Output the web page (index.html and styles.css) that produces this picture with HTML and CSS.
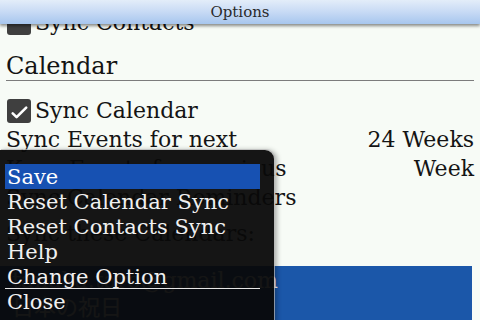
FILE: index.html
```html
<!DOCTYPE html>
<html lang="en">
<head>
<meta charset="utf-8">
<title>Options</title>
<link rel="stylesheet" href="styles.css">
</head>
<body>
<div class="screen">
  <header class="titlebar">Options</header>
  <main class="viewport">
    <div class="scroll">
      <div class="row check-row"><span class="cb"></span><span>Sync Contacts</span></div>
      <h2 class="section">Calendar</h2>
      <div class="row check-row">
        <span class="cb"><svg viewBox="0 0 24 24"><path d="M5.7 14.3 L9.6 18.2 L19.2 8.6"/></svg></span>
        <span>Sync Calendar</span>
      </div>
      <div class="row"><span>Sync Events for next</span><span>24 Weeks</span></div>
      <div class="row"><span>Keep Events for previous</span><span>Week</span></div>
      <div class="row"><span>Sync Calendar Reminders</span></div>
      <div class="row label">Sync these Calendars:</div>
      <div class="cal-list">
        <div class="row cal-row">tanaka.taro@gmail.com</div>
        <div class="row cal-row jp">日本の祝日</div>
      </div>
    </div>
  </main>
  <nav class="menu">
    <div class="menu-item selected">Save</div>
    <div class="menu-item">Reset Calendar Sync</div>
    <div class="menu-item">Reset Contacts Sync</div>
    <div class="menu-item">Help</div>
    <div class="menu-item">Change Option</div>
    <div class="menu-sep"></div>
    <div class="menu-item">Close</div>
  </nav>
</div>
</body>
</html>
```
FILE: styles.css
```css
html, body {
  margin: 0;
  padding: 0;
}
body {
  background: #f7fbf6;
  font-family: "DejaVu Serif", "Liberation Serif", serif;
  color: #141414;
}
.screen {
  position: relative;
  width: 480px;
  height: 320px;
  overflow: hidden;
  display: flex;
  flex-direction: column;
  background: #f7fbf6;
}
.titlebar {
  position: relative;
  z-index: 2;
  flex: none;
  height: 24px;
  line-height: 25px;
  text-align: center;
  font-size: 15px;
  color: #2a2a2a;
  background: linear-gradient(#e3edf9, #cadcf5 45%, #a7c6ee);
  box-shadow: 0 2px 3px rgba(0, 0, 0, 0.45);
}
.viewport {
  flex: 1;
  min-height: 0;
  overflow: hidden;
}
.scroll {
  margin-top: -16px;
}
.row {
  display: flex;
  justify-content: space-between;
  align-items: center;
  height: 29px;
  line-height: 29px;
  padding: 0 6px;
  font-size: 22px;
  white-space: nowrap;
}
.check-row {
  justify-content: flex-start;
  gap: 4px;
}
.cb {
  flex: none;
  width: 24px;
  height: 24px;
  margin-left: 1px;
  border-radius: 3px;
  background: #3f3f3f;
  display: flex;
}
.cb svg {
  width: 24px;
  height: 24px;
}
.cb path {
  fill: none;
  stroke: #ffffff;
  stroke-width: 2.6;
  stroke-linecap: round;
  stroke-linejoin: round;
}
.section {
  margin: 16px 6px 15px;
  font-size: 24px;
  font-weight: normal;
  line-height: 27px;
  border-bottom: 1px solid #7c7c7c;
}
.label {
  margin-top: 7px;
}
.cal-list {
  margin: 18px 8px 0 0;
  background: #1b57a9;
  color: #ffffff;
  padding-top: 1px;
}
.cal-row {
  justify-content: flex-start;
  padding-left: 12px;
  height: 27px;
  line-height: 27px;
}
.jp {
  font-family: "DejaVu Serif", "Noto Sans CJK JP", serif;
}
.menu {
  position: absolute;
  z-index: 3;
  left: 0;
  top: 150px;
  width: 255px;
  height: 200px;
  padding: 14px 14px 0 5px;
  background: rgba(8, 8, 8, 0.95);
  border-top-right-radius: 9px;
  box-shadow: 1px -1px 0 rgba(185, 185, 185, 0.7), 3px 0 5px rgba(0, 0, 0, 0.3);
}
.menu-item {
  height: 25px;
  line-height: 26px;
  padding-left: 2px;
  font-size: 21px;
  color: #f0f0f0;
  white-space: nowrap;
}
.menu-item.selected {
  background: #1751b2;
  color: #ffffff;
}
.menu-sep {
  height: 1px;
  margin-top: -1px;
  background: #e6e6e6;
}
```
